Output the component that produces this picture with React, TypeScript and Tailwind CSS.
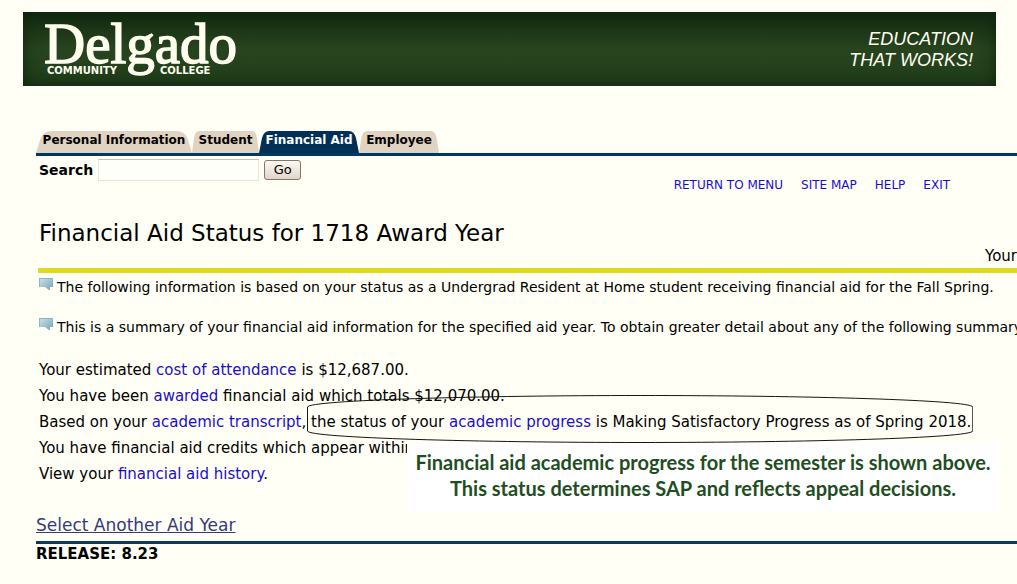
import { ReactNode } from "react";

const tabs = [
  { label: "Personal Information", width: "w-[156px]" },
  { label: "Student", width: "w-[67px]" },
  { label: "Financial Aid", width: "w-[100px]", active: true },
  { label: "Employee", width: "w-20" },
];

const menuLinks = ["RETURN TO MENU", "SITE MAP", "HELP", "EXIT"];

const Tab = ({ label, width, active }: { label: string; width: string; active?: boolean }) => (
  <li className={`relative h-[22px] ${width}`}>
    {/* Slanted tab shape */}
    <svg className="absolute inset-0 w-full h-full" viewBox="0 0 100 22" preserveAspectRatio="none">
      <path
        d="M0 22 L3 7 Q5 0 10 0 H90 Q95 0 97 7 L100 22 Z"
        fill={active ? "#003055" : "#e0d3c2"}
      />
    </svg>
    <a
      href="#"
      className={`relative flex justify-center text-xs leading-[18px] font-bold ${active ? "text-white" : "text-black"}`}
    >
      {label}
    </a>
  </li>
);

const InfoIcon = () => (
  <svg width="14" height="13" viewBox="0 0 14 13" className="shrink-0 mt-px">
    <defs>
      <linearGradient id="bubble" x1="0" y1="0" x2="1" y2="1">
        <stop offset="0" stopColor="#d3e5ea" />
        <stop offset="1" stopColor="#6fa3b5" />
      </linearGradient>
    </defs>
    <path d="M0 0 H14 V9 H11 V12 H10 L6 9 H0 Z" fill="url(#bubble)" />
    <path d="M0 0.5 H14 M0.5 0 V9" stroke="#8fb4c0" fill="none" />
  </svg>
);

const InfoLine = ({ children }: { children: ReactNode }) => (
  <div className="flex items-start gap-1 h-10 pl-px">
    <InfoIcon />
    <p className="text-sm leading-5">{children}</p>
  </div>
);

const TextLink = ({ children }: { children: ReactNode }) => (
  <a href="#" className="text-[#1a0dd0]">{children}</a>
);

export default function App() {
  return (
    <div className="min-h-screen overflow-hidden whitespace-nowrap bg-[#fffff6] pt-3 text-black font-['DejaVu_Sans',sans-serif]">
      {/* Banner */}
      <header className="flex justify-between ml-[23px] mr-[21px] h-[74px] pl-[22px] pr-[23px] bg-[#26421f] bg-linear-to-b from-[#12290f] via-[#28441f] to-[#203d1a] shadow-[inset_0_0_16px_#0d260b]">
        <svg width="200" height="74" viewBox="0 0 200 74" fill="#fffff0">
          <text x="-1" y="51" fontSize="57" stroke="#fffff0" strokeWidth="1.5" className="font-['Liberation_Serif',serif]">Delgado</text>
          <text x="2" y="62" fontSize="10" fontWeight="700">COMMUNITY</text>
          <text x="115" y="62" fontSize="10" fontWeight="700">COLLEGE</text>
        </svg>
        <p className="pt-[17px] text-right italic text-lg leading-[21px] text-[#fffff0] font-['Liberation_Sans',sans-serif]">
          EDUCATION
          <br />
          THAT WORKS!
        </p>
      </header>

      <div className="pl-9">
        {/* Tabs */}
        <nav className="mt-[45px] border-b-3 border-[#003860]">
          <ul className="flex">
            {tabs.map((tab) => (
              <Tab key={tab.label} {...tab} />
            ))}
          </ul>
        </nav>

        {/* Search and menu links */}
        <div className="flex justify-between pt-[2px] pl-[3px] pr-[67px]">
          <form className="flex items-center gap-[5px] h-[23px]">
            <label htmlFor="search" className="text-sm font-bold">Search</label>
            <input
              id="search"
              type="text"
              className="w-[161px] h-[22px] px-1 text-sm bg-[#fffffa] border border-[#e8e6dc] border-t-[#c5c1b4]"
            />
            <button
              type="button"
              className="w-[37px] h-5 rounded-[3px] border border-[#85766a] bg-linear-to-b from-[#fbf8f4] to-[#e2d6ca] text-[13px] leading-4"
            >
              Go
            </button>
          </form>
          <div className="flex gap-[18px] pt-[19px] text-xs leading-4">
            {menuLinks.map((link) => (
              <TextLink key={link}>{link}</TextLink>
            ))}
          </div>
        </div>

        {/* Page title */}
        <h1 className="mt-[25px] pl-[3px] text-[23px] leading-[30px]">Financial Aid Status for 1718 Award Year</h1>
        <p className="text-right text-[15px] leading-4">Your</p>
        <div className="ml-[2px] mt-1 h-[5px] bg-[#e1d91b]" />

        <div className="pt-1 pl-[2px]">
          <InfoLine>
            The following information is based on your status as a Undergrad Resident at Home student receiving financial aid for the Fall Spring.
          </InfoLine>
          <InfoLine>
            This is a summary of your financial aid information for the specified aid year. To obtain greater detail about any of the following summary
          </InfoLine>
        </div>

        {/* Status summary */}
        <div className="relative pl-[3px] text-[15px] leading-[26px]">
          <p>Your estimated <TextLink>cost of attendance</TextLink> is $12,687.00.</p>
          <p>You have been <TextLink>awarded</TextLink> financial aid which totals $12,070.00.</p>
          <p>
            Based on your <TextLink>academic transcript</TextLink>,{" "}
            <span className="relative inline-block">
              the status of your <TextLink>academic progress</TextLink> is Making Satisfactory Progress as of Spring 2018.
              {/* Marker around the progress status */}
              <svg
                className="absolute z-10 -left-1 -top-[14px] w-[calc(100%+6px)] h-12 pointer-events-none"
                viewBox="0 0 684 48"
                preserveAspectRatio="none"
                fill="none"
                stroke="#111111"
              >
                <path d="M0.5 12 C2 5 180 0.5 342 0.5 C510 0.5 682 5 683.5 12 V36 C682 43 510 47.5 342 47.5 C180 47.5 2 43 0.5 36 Z" />
              </svg>
            </span>
          </p>
          <p>You have financial aid credits which appear within</p>
          <p>View your <TextLink>financial aid history</TextLink>.</p>

          {/* Callout note */}
          <div className="absolute left-[371px] top-[86px] w-[592px] h-[68px] pt-[6px] bg-white text-center text-xl leading-[26px] font-bold text-[#1f4e23] font-['Lato',sans-serif]">
            Financial aid academic progress for the semester is shown above.
            <br />
            This status determines SAP and reflects appeal decisions.
          </div>
        </div>

        <a href="#" className="block w-fit mt-[26px] text-[17px] leading-6 underline text-[#343a7d]">
          Select Another Aid Year
        </a>
        <footer className="mt-1 border-t-3 border-[#0b3a5c] text-[15px] leading-5 font-bold">RELEASE: 8.23</footer>
      </div>
    </div>
  );
}
